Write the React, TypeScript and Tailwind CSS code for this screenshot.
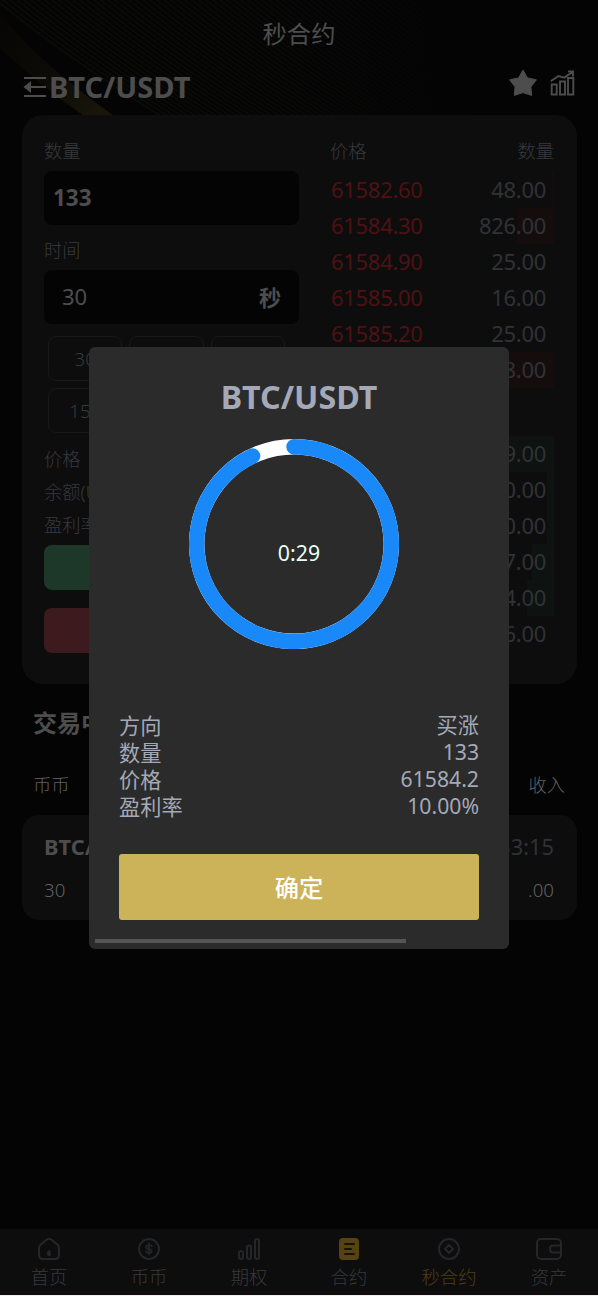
import type { ReactNode } from 'react';

type Level = { price?: string; amount: string; depth: number };

const asks: Level[] = [
  { price: '61582.60', amount: '48.00', depth: 2 },
  { price: '61584.30', amount: '826.00', depth: 37 },
  { price: '61584.90', amount: '25.00', depth: 0 },
  { price: '61585.00', amount: '16.00', depth: 0 },
  { price: '61585.20', amount: '25.00', depth: 0 },
  { amount: '8.00', depth: 112 },
];

const bids: Level[] = [
  { amount: '9.00', depth: 108 },
  { amount: '0.00', depth: 7 },
  { amount: '0.00', depth: 7 },
  { amount: '7.00', depth: 22 },
  { amount: '4.00', depth: 27 },
  { amount: '6.00', depth: 0 },
];

const periods = ['30', '', '', '150', '', ''];

const details = [
  ['方向', '买涨'],
  ['数量', '133'],
  ['价格', '61584.2'],
  ['盈利率', '10.00%'],
];

function BackgroundLines() {
  const arcs = Array.from({ length: 60 }, (_, i) => i);
  return (
    <svg className="absolute left-0 top-0" width="598" height="240" viewBox="0 0 598 240" fill="none">
      <defs>
        <linearGradient id="fade" x1="0" y1="0" x2="598" y2="0" gradientUnits="userSpaceOnUse">
          <stop offset="0" stopColor="#0b0b09" />
          <stop offset="0.45" stopColor="#090908" />
          <stop offset="0.8" stopColor="#040404" />
        </linearGradient>
        <linearGradient id="band" x1="0" y1="30" x2="110" y2="120" gradientUnits="userSpaceOnUse">
          <stop offset="0" stopColor="#070604" />
          <stop offset="0.45" stopColor="#0d0b06" />
          <stop offset="1" stopColor="#1b170c" />
        </linearGradient>
      </defs>
      {arcs.map((i) => (
        <path
          key={i}
          d={`M${-10 + i * 7} -5 Q${70 + i * 7} 62 ${200 + i * 7} 140`}
          stroke="url(#fade)"
          strokeWidth="1.8"
        />
      ))}
      <path d="M0 14 Q38 62 114 116 L84 116 Q38 84 0 48Z" fill="url(#band)" />
    </svg>
  );
}

function BookRow({ price, amount, depth, side }: Level & { side: 'ask' | 'bid' }) {
  return (
    <div className="relative flex h-9 items-center justify-between pl-px pr-2 text-[22px] tracking-[-0.3px]">
      <div
        className={side === 'ask' ? 'absolute inset-y-0 right-0 bg-[#150d0d]' : 'absolute inset-y-0 right-0 bg-[#0e1210]'}
        style={{ width: depth }}
      />
      <span className="relative -top-px text-[#4f1114]">{price}</span>
      <span className="relative -top-px text-[#303237]">{amount}</span>
    </div>
  );
}

function NavItem({ label, active, children }: { label: string; active?: boolean; children: ReactNode }) {
  return (
    <div className="flex flex-1 flex-col items-center pt-2">
      <svg width="28" height="24" viewBox="0 0 28 24" fill="none" stroke="#25262a" strokeWidth="2" strokeLinecap="round" strokeLinejoin="round">
        {children}
      </svg>
      <span className={active ? 'mt-1 text-[18.3px] font-light leading-6 text-[#503d16]' : 'mt-1 text-[18.3px] font-light leading-6 text-[#37393e]'}>
        {label}
      </span>
    </div>
  );
}

function CountdownRing() {
  return (
    <svg className="block" width="210" height="210" viewBox="0 0 210 210" fill="none">
      <circle cx="105" cy="105" r="97.3" stroke="#fff" strokeWidth="15.4" />
      <path d="M105 7.7 A97.3 97.3 0 1 1 63.6 16.95" stroke="#1989fa" strokeWidth="15.4" strokeLinecap="round" />
    </svg>
  );
}

export default function App() {
  return (
    <div className="relative h-[1296px] w-[598px] overflow-hidden bg-[#040404] font-['Noto_Sans','Noto_Sans_CJK_SC',sans-serif]">
      <BackgroundLines />
      <div className="relative flex h-[1295px] flex-col">
        <header className="flex h-[66px] items-center justify-center pt-0.5 text-[24.3px] text-[#4d4d4d]">秒合约</header>
        <div className="flex h-[49px] items-start justify-between pl-[22px] pr-[23px] text-[#4d4d4d]">
          <div className="flex h-[41px] items-center">
            <svg className="mt-px" width="26" height="24" viewBox="0 0 26 24" stroke="#4d4d4d" strokeWidth="2">
              <path d="M2 3h22M9 12h15M2 21h22" />
              <path d="M9 6v12L1.5 12Z" fill="#4d4d4d" stroke="none" />
            </svg>
            <span className="pl-px text-[29.1px] font-bold leading-8">BTC/USDT</span>
          </div>
          <div className="flex items-center gap-[13px] pt-[3px]">
            <svg width="28" height="28" viewBox="0 0 28 28" fill="#4d4d4d" stroke="#4d4d4d" strokeLinejoin="round">
              <path d="M14 1l4.5 7.9 8.9 1.9-5.5 7.1.8 8.5L14 23.6l-8.7 2.8.8-8.5L.6 10.8l8.9-1.9Z" />
            </svg>
            <svg width="25" height="26" viewBox="0 0 25 26" fill="none" stroke="#4d4d4d" strokeWidth="1.9">
              <path d="M1.7 14.5h5v10h-5zM10 11.5h5v13h-5zM18 8h5.3v16.5H18zM.7 11.3 8.5 6l6 1.6L22.5 1.7M18 1.4h5v5" />
            </svg>
          </div>
        </div>

        <section className="mx-[22px] flex h-[569px] w-[555px] justify-between rounded-[21px] bg-[#0d0d0d] pl-[22px] pr-[23px] pt-[22px]">
          <div className="w-[255px]">
            <div className="h-[34px] pt-px text-[18.3px] font-light leading-[26px] text-[#37393e]">数量</div>
            <div className="flex h-[54px] items-center rounded-lg bg-[#040404] px-[9px] text-[22.5px] font-bold text-[#4d4d4d]">133</div>
            <div className="h-[45px] pt-3 text-[18.3px] font-light leading-[26px] text-[#37393e]">时间</div>
            <div className="flex h-[54px] items-center justify-between rounded-lg bg-[#040404] px-[18px] text-[22px] text-[#4d4d4d]">
              <span className="pb-0.5">30</span>
              <span className="font-bold">秒</span>
            </div>
            <div className="ml-1 mt-3 grid w-[237px] grid-cols-3 gap-[7px]">
              {periods.map((p, i) => (
                <div key={i} className="flex h-[45px] items-center justify-center rounded-lg border border-[#17181c] text-[18.5px] font-light text-[#37393e]">
                  {p}
                </div>
              ))}
            </div>
            <div className="mt-[9px] h-[99px] text-[18.3px] font-light leading-[33px] text-[#37393e]">
              <div>价格</div>
              <div>余额(U</div>
              <div>盈利率</div>
            </div>
            <div className="mt-1 h-[45px] rounded-lg bg-[#1d3728]" />
            <div className="mt-[18px] h-[45px] rounded-lg bg-[#3d1a1e]" />
          </div>

          <div className="w-[224px]">
            <div className="flex h-[35px] justify-between pt-px text-[18.3px] font-light leading-[26px] text-[#37393e]">
              <span>价格</span>
              <span>数量</span>
            </div>
            {asks.map((r, i) => (
              <BookRow key={i} {...r} side="ask" />
            ))}
            <div className="h-12" />
            {bids.map((r, i) => (
              <BookRow key={i} {...r} side="bid" />
            ))}
          </div>
        </section>

        <div className="px-[33px] pt-[22px] text-[24px] font-bold leading-[34px] text-[#4d4d4d]">交易中</div>
        <div className="mt-8 flex justify-between px-[33px] text-[18.3px] font-light leading-[26px] text-[#606060]">
          <span>币币</span>
          <span>收入</span>
        </div>
        <section className="mx-[22px] mt-[17px] h-[105px] w-[555px] rounded-[17px] bg-[#0d0d0d] pl-[22px] pr-[23px] pt-[17px] text-[#4d4d4d]">
          <div className="flex justify-between text-[21.8px] leading-[30px]">
            <span className="font-bold">BTC/</span>
            <span className="text-[#303237]">53:15</span>
          </div>
          <div className="mt-[13px] flex justify-between text-[18.7px] font-light leading-[30px] text-[#606060]">
            <span>30</span>
            <span>.00</span>
          </div>
        </section>

        <nav className="-ml-px mt-auto flex h-[66px] w-[600px] bg-[#0d0d0d]">
          <NavItem label="首页">
            <path d="M4 11q0-1.8 1.5-3.2L11.7 2.6q2.3-1.6 4.6 0l6.2 5.2Q24 9.2 24 11v7q0 4-4 4H8q-4 0-4-4Z" />
            <path d="M14 15v2.5" strokeWidth="3.6" />
          </NavItem>
          <NavItem label="币币">
            <circle cx="14" cy="12" r="10" />
            <path d="M17 9.3Q16.4 8 14 8c-3.8 0-3.8 3.4-.2 4 4 .6 3.7 4 .2 4-2.1 0-2.8-.8-3.2-1.8M14 6.5v11" strokeWidth="1.7" />
          </NavItem>
          <NavItem label="期权">
            <rect x="4" y="14" width="4" height="8" rx="2" />
            <rect x="12" y="8.5" width="4" height="13.5" rx="2" />
            <rect x="20" y="2" width="4" height="20" rx="2" />
          </NavItem>
          <NavItem label="合约">
            <rect x="5" y="2" width="18" height="20" rx="3" fill="#564311" stroke="#564311" />
            <path d="M10 7h9M10 12h6M10 17h9" stroke="#171307" />
          </NavItem>
          <NavItem label="秒合约" active>
            <circle cx="14" cy="12" r="10" />
            <path d="m14 8 4 4-4 4-4-4Z" />
          </NavItem>
          <NavItem label="资产">
            <rect x="2" y="2" width="24" height="20" rx="4" />
            <path d="M26 8.5h-8q-3 0-3 3.5t3 3.5h8" />
          </NavItem>
        </nav>
      </div>
      <div className="relative h-px bg-[#f5eeee]" />

      <div role="dialog" className="absolute left-[89px] top-[347px] flex h-[602px] w-[420px] flex-col rounded-md bg-[#2b2b2b] px-[30px] text-[#a3a9b8]">
        <h2 className="pt-[30px] text-center text-[32.2px] font-bold leading-10">BTC/USDT</h2>
        <div className="relative mt-[22px] pl-[70px]">
          <CountdownRing />
          <span className="absolute left-0 right-0 top-[99px] text-center text-[21.3px] leading-[30px] text-[#e8fff5]">0:29</span>
        </div>
        <div className="mt-[63px] text-[21.2px] leading-[27px]">
          {details.map(([k, v]) => (
            <div key={k} className="flex h-[27px] justify-between">
              <span>{k}</span>
              <span className="-mt-px">{v}</span>
            </div>
          ))}
        </div>
        <button className="mt-[34px] h-[66px] shrink-0 rounded-[3px] bg-[#ccb258] pt-0.5 text-[24.3px] font-medium text-white">确定</button>
        <div className="-ml-6 mt-[19px] h-1 w-[311px] shrink-0 bg-[#555555]" />
      </div>
    </div>
  );
}
